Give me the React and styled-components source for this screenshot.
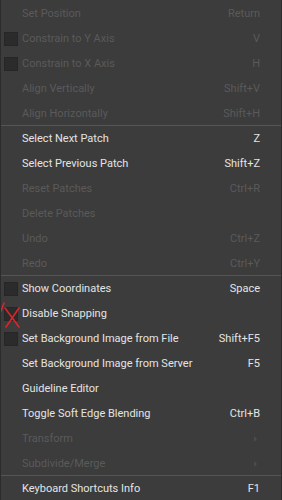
import React from "react";
import styled, { createGlobalStyle } from "styled-components";

const Global = createGlobalStyle`
  html, body { margin: 0; padding: 0; background: #3c3c3c; }
  body { font-family: Roboto, "Noto Sans", "Liberation Sans", sans-serif; }
`;

const Menu = styled.div`
  width: 282px;
  height: 500px;
  box-sizing: border-box;
  background: #3c3c3c;
  border-left: 1px solid #2c2c2c;
  border-right: 1px solid #2c2c2c;
  padding-top: 1px;
  display: flex;
  flex-direction: column;
  overflow: hidden;
`;

const Group = styled.div`
  display: flex;
  flex-direction: column;
  & + & {
    border-top: 1px solid #555555;
    margin-top: -1px;
  }
`;

const Row = styled.div`
  position: relative;
  height: 25px;
  display: grid;
  grid-template-columns: 21px 1fr auto;
  align-items: center;
  padding-right: 21px;
  font-size: 11px;
  color: ${(p) => (p.$disabled ? "#5a5a5a" : "#e4e4e4")};
`;

const Box = styled.span`
  width: 14px;
  height: 14px;
  margin-left: 3px;
  box-sizing: border-box;
  background: #2b2b2b;
  border: 1px solid #262626;
  visibility: ${(p) => (p.$show ? "visible" : "hidden")};
`;

const Label = styled.span`
  white-space: nowrap;
`;

const Shortcut = styled.span`
  white-space: nowrap;
  text-align: right;
`;

const Arrow = styled.span`
  width: 0;
  height: 0;
  border-top: 3px solid transparent;
  border-bottom: 3px solid transparent;
  border-left: 3px solid #4c4c4c;
  margin-right: 3px;
`;

const Cross = styled.svg`
  position: absolute;
  left: 0;
  top: -7px;
  pointer-events: none;
`;

const groups = [
  [
    { label: "Set Position", sc: "Return", dis: true },
    { label: "Constrain to Y Axis", sc: "V", dis: true, box: true },
    { label: "Constrain to X Axis", sc: "H", dis: true, box: true },
    { label: "Align Vertically", sc: "Shift+V", dis: true },
    { label: "Align Horizontally", sc: "Shift+H", dis: true },
  ],
  [
    { label: "Select Next Patch", sc: "Z" },
    { label: "Select Previous Patch", sc: "Shift+Z" },
    { label: "Reset Patches", sc: "Ctrl+R", dis: true },
    { label: "Delete Patches", sc: "", dis: true },
    { label: "Undo", sc: "Ctrl+Z", dis: true },
    { label: "Redo", sc: "Ctrl+Y", dis: true },
  ],
  [
    { label: "Show Coordinates", sc: "Space", box: true },
    { label: "Disable Snapping", sc: "", box: true, cross: true },
    { label: "Set Background Image from File", sc: "Shift+F5", box: true },
    { label: "Set Background Image from Server", sc: "F5" },
    { label: "Guideline Editor", sc: "" },
    { label: "Toggle Soft Edge Blending", sc: "Ctrl+B" },
    { label: "Transform", dis: true, sub: true },
    { label: "Subdivide/Merge", dis: true, sub: true },
  ],
  [{ label: "Keyboard Shortcuts Info", sc: "F1" }],
];

export default function App() {
  return (
    <>
      <Global />
      <Menu>
        {groups.map((g, gi) => (
          <Group key={gi}>
            {g.map((it) => (
              <Row key={it.label} $disabled={it.dis}>
                <Box $show={it.box} />
                <Label>{it.label}</Label>
                {it.sub ? <Arrow /> : <Shortcut>{it.sc}</Shortcut>}
                {it.cross && (
                  <Cross width="22" height="34" viewBox="0 0 22 34">
                    <path
                      d="M4 14 L18 33 M18 14 L5 33 M0 17 L3 9"
                      stroke="#d8262c"
                      strokeWidth="1.6"
                      fill="none"
                      strokeLinecap="round"
                    />
                  </Cross>
                )}
              </Row>
            ))}
          </Group>
        ))}
      </Menu>
    </>
  );
}
